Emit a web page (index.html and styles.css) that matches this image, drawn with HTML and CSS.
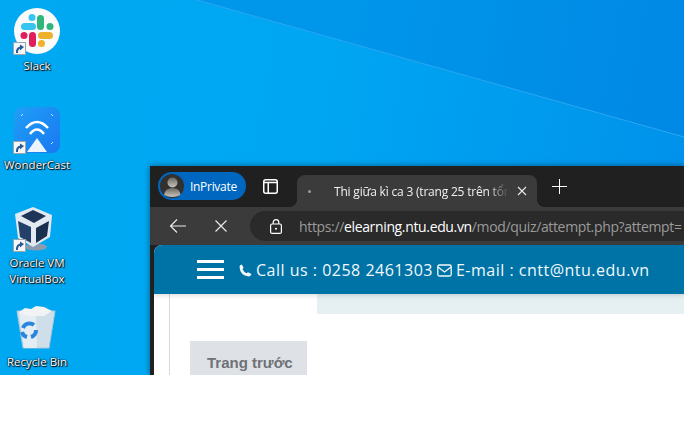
FILE: index.html
```html
<!DOCTYPE html>
<html lang="en">
<head>
    <meta charset="UTF-8">
    <title>Desktop</title>
    <link rel="stylesheet" href="styles.css">
</head>
<body>
    <div class="screen">
        <svg class="streak" width="684" height="375" viewBox="0 0 684 375">
            <polygon points="197,0 684,137 684,0" fill="#0070d8" opacity="0.28"/>
            <line x1="197" y1="0" x2="684" y2="137" stroke="#2ba6f2" stroke-width="1"/>
        </svg>

        <!--desktop icons-->
        <div class="icon icon-slack">
            <svg width="46" height="46" viewBox="0 0 46 46">
                <circle cx="23" cy="23" r="23" fill="#fbfbfb"/>
                <rect x="7" y="15" width="15" height="7" rx="3.500" fill="#36c5f0"/>
                <circle cx="18" cy="9.500" r="3.500" fill="#36c5f0"/>
                <rect x="23" y="7" width="7" height="15" rx="3.500" fill="#2eb67d"/>
                <circle cx="36" cy="18.500" r="3.500" fill="#2eb67d"/>
                <rect x="24" y="24" width="15" height="7" rx="3.500" fill="#ecb22e"/>
                <circle cx="27.500" cy="35.500" r="3.500" fill="#ecb22e"/>
                <rect x="15" y="24" width="7" height="15" rx="3.500" fill="#e01e5a"/>
                <circle cx="10" cy="27.500" r="3.500" fill="#e01e5a"/>
            </svg>
            <svg class="shortcut" width="13" height="13" viewBox="0 0 13 13">
                <rect x="0.500" y="0.500" width="12" height="12" fill="#f4f6f8" stroke="#9aa5ad"/>
                <path d="M4 11 Q3.500 6.500 7.500 5.500" fill="none" stroke="#2a5a94" stroke-width="2"/>
                <polygon points="7,2.500 11,5 7,8.500" fill="#2a5a94"/>
            </svg>
            <div class="label">Slack</div>
        </div>

        <div class="icon icon-wonder">
            <svg width="46" height="46" viewBox="0 0 46 46">
                <defs>
                    <linearGradient id="wc" x1="0" y1="0" x2="1" y2="1">
                        <stop offset="0" stop-color="#1f9ff8"/>
                        <stop offset="1" stop-color="#1a78f0"/>
                    </linearGradient>
                </defs>
                <rect width="46" height="46" rx="8" fill="url(#wc)"/>
                <path d="M12 21 Q23 9 34 21" fill="none" stroke="#fff" stroke-width="2.500"/>
                <path d="M16 27 Q23 18 30 27" fill="none" stroke="#fff" stroke-width="2.500"/>
                <polygon points="23,31 33,45 13,45" fill="#eaf5ff"/>
                <path d="M7 9 L9 7 M37 7 L39 9 M39 35 L37 37" stroke="#cfe8ff" stroke-width="1" fill="none"/>
            </svg>
            <svg class="shortcut" width="13" height="13" viewBox="0 0 13 13">
                <rect x="0.500" y="0.500" width="12" height="12" fill="#f4f6f8" stroke="#9aa5ad"/>
                <path d="M4 11 Q3.500 6.500 7.500 5.500" fill="none" stroke="#2a5a94" stroke-width="2"/>
                <polygon points="7,2.500 11,5 7,8.500" fill="#2a5a94"/>
            </svg>
            <div class="label">WonderCast</div>
        </div>

        <div class="icon icon-vbox">
            <svg width="46" height="46" viewBox="0 0 46 46">
                <ellipse cx="22" cy="42" rx="11" ry="3.500" fill="#8d9bb0"/>
                <polygon points="19,2 38,10 36,32 19,42 4,33 1,9" fill="#e3e9f1"/>
                <polygon points="19,5 32,11 20,18 7,11" fill="#1e3557"/>
                <polygon points="4,16 17,22 17,38 6,32" fill="#23406a"/>
                <polygon points="22,23 35,16 33,31 22,38" fill="#1a3050"/>
            </svg>
            <svg class="shortcut" width="13" height="13" viewBox="0 0 13 13">
                <rect x="0.500" y="0.500" width="12" height="12" fill="#f4f6f8" stroke="#9aa5ad"/>
                <path d="M4 11 Q3.500 6.500 7.500 5.500" fill="none" stroke="#2a5a94" stroke-width="2"/>
                <polygon points="7,2.500 11,5 7,8.500" fill="#2a5a94"/>
            </svg>
            <div class="label">Oracle VM<br>VirtualBox</div>
        </div>

        <div class="icon icon-bin">
            <svg width="46" height="44" viewBox="0 0 46 44">
                <polygon points="3,6 41,6 35,43 9,43" fill="#cfdfea" stroke="#a9c8dc" stroke-width="1"/>
                <polygon points="5,7 22,9 23,43 10,43" fill="#e4edf3"/>
                <path d="M5 7 L11 3 L17 4 L22 1 L30 2 L38 6 L30 11 L14 11 Z" fill="#f1f3f5"/>
                <path d="M9 23 A7 7 0 0 1 20 20" fill="none" stroke="#2a86dc" stroke-width="4"/>
                <path d="M22 25 A7 7 0 0 1 17 32" fill="none" stroke="#2a86dc" stroke-width="4"/>
                <path d="M13 32 A7 7 0 0 1 8 27" fill="none" stroke="#2a86dc" stroke-width="4"/>
            </svg>
            <div class="label">Recycle Bin</div>
        </div>

        <!--browser window-->
        <div class="browser">
            <div class="tabstrip">
                <div class="profile">
                    <svg class="avatar" width="24" height="24" viewBox="0 0 24 24">
                        <defs>
                            <linearGradient id="person" x1="0" y1="0" x2="0" y2="1">
                                <stop offset="0" stop-color="#6a6763"/>
                                <stop offset="1" stop-color="#c9c5bd"/>
                            </linearGradient>
                        </defs>
                        <circle cx="12" cy="12" r="12" fill="#33312f"/>
                        <circle cx="12.500" cy="8.500" r="5" fill="url(#person)"/>
                        <path d="M4 21 Q5 14 12.500 14 Q20 14 20.500 21 Q12 25 4 21 Z" fill="url(#person)"/>
                    </svg>
                    <span>InPrivate</span>
                </div>
                <svg class="tabs-btn" width="15" height="15" viewBox="0 0 15 15">
                    <rect x="0.750" y="0.750" width="13.500" height="13.500" rx="2" fill="none" stroke="#fff" stroke-width="1.500"/>
                    <path d="M1 3.500 H14 M5.250 3.500 V14" fill="none" stroke="#fff" stroke-width="1.500"/>
                </svg>
                <div class="tab">
                    <span class="tab-dot"></span>
                    <span class="tab-title">Thi giữa kì ca 3 (trang 25 trên tổn</span>
                    <svg class="tab-close" width="10" height="10" viewBox="0 0 10 10">
                        <path d="M1 1 L9 9 M9 1 L1 9" stroke="#e8e8e8" stroke-width="1.100"/>
                    </svg>
                </div>
                <svg class="new-tab" width="15" height="15" viewBox="0 0 15 15">
                    <path d="M7.500 0 V15 M0 7.500 H15" stroke="#fff" stroke-width="1"/>
                </svg>
            </div>

            <div class="toolbar">
                <svg width="18" height="16" viewBox="0 0 18 16">
                    <path d="M17 8 H1.500 M8 1.500 L1.500 8 L8 14.500" fill="none" stroke="#eee" stroke-width="1.100"/>
                </svg>
                <svg class="stop" width="12" height="12" viewBox="0 0 12 12">
                    <path d="M0.500 0.500 L11.500 11.500 M11.500 0.500 L0.500 11.500" stroke="#eee" stroke-width="1.100"/>
                </svg>
                <div class="address">
                    <svg width="12" height="15" viewBox="0 0 12 15">
                        <rect x="0.600" y="5" width="10.800" height="9.400" rx="1.500" fill="none" stroke="#fff" stroke-width="1.200"/>
                        <path d="M3.200 5 V3.500 A2.800 2.800 0 0 1 8.800 3.500 V5" fill="none" stroke="#fff" stroke-width="1.200"/>
                        <circle cx="6" cy="9.700" r="1" fill="#fff"/>
                    </svg>
                    <div class="url">https://<b>elearning.ntu.edu.vn</b>/mod/quiz/attempt.php?attempt=</div>
                </div>
            </div>

            <div class="page">
                <div class="site-head">
                    <div class="burger"><i></i><i></i><i></i></div>
                    <div class="contact">
                        <svg width="13" height="13" viewBox="0 0 13 13">
                            <path d="M2.800 0.500 L4.600 3.800 L3.500 5.200 Q4.800 7.900 7.500 9.300 L9 8.200 L12.500 10.100 Q11.800 12.500 9.800 12.500 Q1 11.500 0.500 2.800 Q0.700 1 2.800 0.500 Z" fill="#f2f8fb"/>
                        </svg>
                        <span>Call us : 0258 2461303</span>
                        <svg width="15" height="13" viewBox="0 0 15 13">
                            <rect x="0.800" y="1" width="13.400" height="11" rx="1.500" fill="none" stroke="#f2f8fb" stroke-width="1.300"/>
                            <path d="M1 3 L7.500 8 L14 3" fill="none" stroke="#f2f8fb" stroke-width="1.300"/>
                        </svg>
                        <span>E-mail : cntt@ntu.edu.vn</span>
                    </div>
                </div>
                <div class="page-body">
                    <div class="sidebar">
                        <div class="prev-btn">Trang trước</div>
                    </div>
                    <div class="main">
                        <div class="info-strip"></div>
                    </div>
                </div>
            </div>
        </div>
    </div>
</body>
</html>
```

FILE: styles.css
```css
*{
    margin: 0;
    padding: 0;
    box-sizing: border-box;
}
body{
    background-color: #fff;
    font-family: "Open Sans", "Noto Sans CJK SC", sans-serif;
}
.screen{
    width: 684px;
    height: 375px;
    position: relative;
    overflow: hidden;
    background: linear-gradient(100deg, #00a9f2 0%, #00a6f2 45%, #0090ea 100%);
}
.streak{
    position: absolute;
    left: 0;
    top: 0;
}

/*desktop icons*/
.icon{
    position: absolute;
    left: 0;
    width: 74px;
    display: flex;
    flex-direction: column;
    align-items: center;
}
.icon-slack{ top: 8px; }
.icon-wonder{ top: 107px; }
.icon-vbox{ top: 205px; }
.icon-bin{ top: 305px; }
.label{
    color: #fff;
    font-size: 11.5px;
    line-height: 16px;
    margin-top: 4px;
    text-align: center;
    text-shadow: 1px 1px 1px #000, 0 0 2px #00213a, 0 0 1px #000;
}
.icon-bin .label{
    margin-top: 5px;
}
.shortcut{
    position: absolute;
    left: 13px;
    top: 34px;
}

/*browser window*/
.browser{
    position: absolute;
    left: 150px;
    top: 166px;
    width: 534px;
    height: 209px;
    background-color: #202020;
    box-shadow: 0 0 6px rgba(0, 0, 0, 0.45);
    overflow: hidden;
}
.tabstrip{
    height: 41px;
    display: flex;
    align-items: center;
    padding: 6px 0 0 8px;
    background-color: #202020;
}
.profile{
    width: 88px;
    height: 28px;
    border-radius: 14px;
    background-color: #0067c0;
    display: flex;
    align-items: center;
    gap: 6px;
    padding-left: 2px;
    color: #fff;
    font-size: 12px;
    letter-spacing: -0.3px;
    flex-shrink: 0;
    margin-top: -7px;
}
.avatar{
    flex-shrink: 0;
}
.tabs-btn{
    margin: -7px 0 0 17px;
    flex-shrink: 0;
}
.tab{
    width: 240px;
    height: 32px;
    margin: 3px 0 0 19px;
    padding: 0 11px 0 8px;
    background-color: #3b3b3b;
    border-radius: 8px 8px 0 0;
    display: flex;
    align-items: center;
    flex-shrink: 0;
    color: #f0f0f0;
    font-size: 12px;
    letter-spacing: -0.2px;
    position: relative;
}
.tab::before,
.tab::after{
    content: "";
    position: absolute;
    bottom: 0;
    width: 8px;
    height: 8px;
}
.tab::before{
    left: -8px;
    background: radial-gradient(circle at 0 0, transparent 8px, #3b3b3b 8px);
}
.tab::after{
    right: -8px;
    background: radial-gradient(circle at 100% 0, transparent 8px, #3b3b3b 8px);
}
.tab-dot{
    width: 3px;
    height: 3px;
    border-radius: 50%;
    background-color: #999;
    flex-shrink: 0;
    margin: 0 23px 0 3px;
}
.tab-title{
    white-space: nowrap;
    width: 175px;
    flex-shrink: 0;
    -webkit-mask-image: linear-gradient(90deg, #000 88%, transparent);
    mask-image: linear-gradient(90deg, #000 88%, transparent);
}
.tab-close{
    margin-left: 8px;
    flex-shrink: 0;
}
.new-tab{
    margin: -7px 0 0 15px;
    flex-shrink: 0;
}
.toolbar{
    height: 38px;
    background-color: #3b3b3b;
    display: flex;
    align-items: center;
    padding-left: 19px;
}
.stop{
    margin-left: 28px;
    flex-shrink: 0;
}
.address{
    margin-left: 23px;
    flex: 1;
    height: 30px;
    background-color: #2a2a2a;
    border-radius: 15px 0 0 15px;
    display: flex;
    align-items: center;
    gap: 17px;
    padding-left: 20px;
    min-width: 0;
}
.address svg{
    flex-shrink: 0;
}
.url{
    color: #9a9a9a;
    font-size: 14px;
    letter-spacing: -0.35px;
    white-space: nowrap;
}
.url b{
    color: #fff;
    font-weight: 400;
}
.page{
    margin-left: 4px;
    height: 130px;
    background-color: #fff;
    border-radius: 8px 0 0 0;
    overflow: hidden;
}
.site-head{
    height: 49px;
    background-color: #0073a6;
    display: flex;
    align-items: center;
    gap: 15px;
    padding-left: 43px;
    box-shadow: 0 2px 4px rgba(0, 0, 0, 0.12);
    position: relative;
}
.burger{
    width: 27px;
    display: flex;
    flex-direction: column;
    gap: 5px;
}
.burger i{
    display: block;
    height: 3px;
    background-color: #fff;
}
.contact{
    display: flex;
    align-items: center;
    gap: 4px;
    padding-top: 1px;
    color: #f2f8fb;
    font-size: 16px;
    font-weight: 500;
    letter-spacing: 0.5px;
    white-space: nowrap;
}
.page-body{
    display: flex;
    height: 81px;
}
.sidebar{
    width: 163px;
    padding: 47px 0 0 36px;
    background: linear-gradient(90deg, #fff 15px, #d8d8d8 15px, #d8d8d8 16px, #fff 16px);
}
.prev-btn{
    width: 117px;
    height: 40px;
    background-color: #dee1e6;
    color: #6f7276;
    font-family: "Liberation Sans", sans-serif;
    font-size: 15px;
    font-weight: 700;
    padding: 13px 0 0 17px;
}
.main{
    flex: 1;
}
.info-strip{
    height: 20px;
    background-color: #e6f0f3;
}
```
